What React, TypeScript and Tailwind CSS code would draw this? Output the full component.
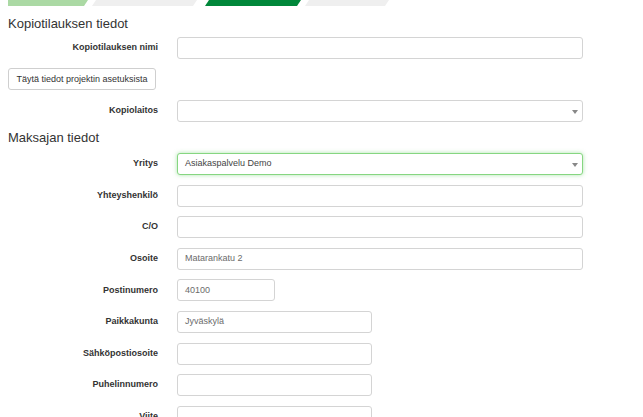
import React from 'react';

type Field = { label: string; value?: string; w: string; select?: boolean; focus?: boolean };

const payer: Field[] = [
  { label: 'Yritys', value: 'Asiakaspalvelu Demo', w: 'w-[406px]', select: true, focus: true },
  { label: 'Yhteyshenkilö', w: 'w-[406px]' },
  { label: 'C/O', w: 'w-[406px]' },
  { label: 'Osoite', value: 'Matarankatu 2', w: 'w-[406px]' },
  { label: 'Postinumero', value: '40100', w: 'w-[98px]' },
  { label: 'Paikkakunta', value: 'Jyväskylä', w: 'w-[195px]' },
  { label: 'Sähköpostiosoite', w: 'w-[195px]' },
  { label: 'Puhelinnumero', w: 'w-[195px]' },
  { label: 'Viite', w: 'w-[195px]' },
];

function Row({ f, className = '' }: { f: Field; className?: string }) {
  return (
    <div className={`flex items-center h-[22px] ${className}`}>
      <div className="w-[150px] text-right text-[9px] font-bold text-[#333]">{f.label}</div>
      <div
        className={`relative ml-[19px] h-[22px] ${f.w} rounded-[3px] border bg-white flex items-center pl-[7px] text-[9px] ${
          f.focus ? 'border-[#86d681] shadow-[0_0_4px_rgba(102,204,102,0.55)] text-[#444]' : 'border-[#d4d4d4] text-[#6b6b6b]'
        }`}
      >
        {f.value}
        {f.select && (
          <span className="absolute right-[4px] top-[9px] w-0 h-0 border-l-[3px] border-r-[3px] border-t-[4px] border-l-transparent border-r-transparent border-t-[#888]" />
        )}
      </div>
    </div>
  );
}

export default function App() {
  return (
    <div className="w-[643px] h-[417px] overflow-hidden bg-white text-[#333] font-['Liberation_Sans',Arial,sans-serif]">
      <div className="flex h-[6px]">
        <div className="ml-[8px] w-[80px] bg-[#abd9a4] [clip-path:polygon(0_0,100%_0,calc(100%-4px)_100%,0_100%)]" />
        <div className="ml-[4px] w-[105px] bg-[#efefef] [clip-path:polygon(4px_0,100%_0,calc(100%-4px)_100%,0_100%)]" />
        <div className="ml-[8px] w-[96px] bg-[#00873a] [clip-path:polygon(4px_0,100%_0,calc(100%-4px)_100%,0_100%)]" />
        <div className="ml-[4px] w-[84px] bg-[#efefef] [clip-path:polygon(4px_0,100%_0,calc(100%-4px)_100%,0_100%)]" />
      </div>

      <div className="pl-[8px] flex flex-col">
        <h2 className="mt-[11px] text-[13px] leading-[14px] font-normal">Kopiotilauksen tiedot</h2>
        <Row className="mt-[6px]" f={{ label: 'Kopiotilauksen nimi', w: 'w-[406px]' }} />
        <div className="mt-[9px] flex">
          <button className="block h-[22px] w-[148px] rounded-[3px] border border-[#cfcfcf] bg-white text-[9px] leading-none text-[#333]">
            Täytä tiedot projektin asetuksista
          </button>
        </div>
        <Row className="mt-[10px]" f={{ label: 'Kopiolaitos', w: 'w-[406px]', select: true }} />
        <h2 className="mt-[9px] text-[13px] leading-[14px] font-normal">Maksajan tiedot</h2>
        <div className="mt-[8px] flex flex-col gap-[9.6px]">
          {payer.map(f => (
            <Row key={f.label} f={f} />
          ))}
        </div>
      </div>
    </div>
  );
}
